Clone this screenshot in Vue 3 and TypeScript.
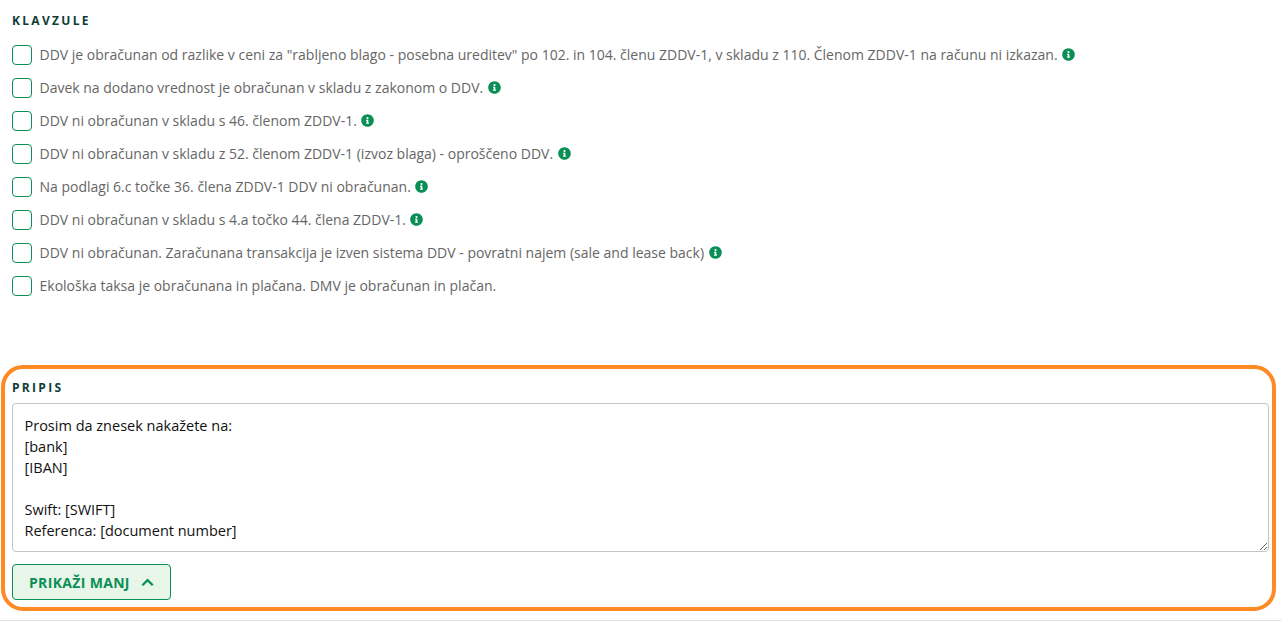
<template>
  <div class="page">
    <section class="clauses">
      <h3 class="label">KLAVZULE</h3>
      <ul class="clause-list">
        <li v-for="(clause, index) in clauses" :key="index" class="clause">
          <label class="clause-label">
            <input v-model="clause.checked" type="checkbox" class="check" />
            <span>{{ clause.text }}</span>
          </label>
          <svg v-if="clause.info" class="info" viewBox="0 0 512 512" aria-hidden="true">
            <path
              d="M256 8C119 8 8 119 8 256s111 248 248 248 248-111 248-248S393 8 256 8zm0 110c23.200 0 42 18.800 42 42s-18.800 42-42 42-42-18.800-42-42 18.800-42 42-42zm56 254c0 6.600-5.400 12-12 12h-88c-6.600 0-12-5.400-12-12v-24c0-6.600 5.400-12 12-12h12v-64h-12c-6.600 0-12-5.400-12-12v-24c0-6.600 5.400-12 12-12h64c6.600 0 12 5.400 12 12v100h12c6.600 0 12 5.400 12 12v24z"
            />
          </svg>
        </li>
      </ul>
    </section>

    <section class="note">
      <h3 class="label">PRIPIS</h3>
      <textarea v-model="note" class="note-input" spellcheck="false"></textarea>
      <button class="toggle" type="button">
        PRIKAŽI MANJ
        <svg class="chevron" viewBox="0 0 14 9" aria-hidden="true">
          <path d="M1.500 7.500 7 2l5.500 5.500" />
        </svg>
      </button>
    </section>
    <div class="divider"></div>
  </div>
</template>

<script setup lang="ts">
import { ref } from 'vue'

// Clause options
const clauses = ref([
  {
    text: 'DDV je obračunan od razlike v ceni za "rabljeno blago - posebna ureditev" po 102. in 104. členu ZDDV-1, v skladu z 110. Členom ZDDV-1 na računu ni izkazan.',
    info: true,
    checked: false
  },
  { text: 'Davek na dodano vrednost je obračunan v skladu z zakonom o DDV.', info: true, checked: false },
  { text: 'DDV ni obračunan v skladu s 46. členom ZDDV-1.', info: true, checked: false },
  { text: 'DDV ni obračunan v skladu z 52. členom ZDDV-1 (izvoz blaga) - oproščeno DDV.', info: true, checked: false },
  { text: 'Na podlagi 6.c točke 36. člena ZDDV-1 DDV ni obračunan.', info: true, checked: false },
  { text: 'DDV ni obračunan v skladu s 4.a točko 44. člena ZDDV-1.', info: true, checked: false },
  {
    text: 'DDV ni obračunan. Zaračunana transakcija je izven sistema DDV - povratni najem (sale and lease back)',
    info: true,
    checked: false
  },
  { text: 'Ekološka taksa je obračunana in plačana. DMV je obračunan in plačan.', info: false, checked: false }
])

// Note text
const note = ref(
  'Prosim da znesek nakažete na:\n[bank]\n[IBAN]\n\nSwift: [SWIFT]\nReferenca: [document number]'
)
</script>

<style scoped>
.page {
  width: 1281px;
  height: 621px;
  overflow: hidden;
  font-family: 'Open Sans', sans-serif;
  color: #666;
}

.clauses {
  height: 365px;
  padding: 14px 12px 0;
  box-sizing: border-box;
}

.label {
  margin: 0;
  font-size: 12px;
  line-height: 13px;
  font-weight: 700;
  letter-spacing: 2.300px;
  color: #0f3d36;
}

.clause-list {
  list-style: none;
  margin: 11px 0 0;
  padding: 0;
}

.clause {
  display: flex;
  align-items: center;
  height: 33px;
}

.clause-label {
  display: flex;
  align-items: center;
  gap: 7.500px;
  font-size: 14px;
}

.check {
  appearance: none;
  width: 20px;
  height: 20px;
  margin: 0;
  border: 1px solid #0a8f55;
  border-radius: 4px;
  background: #fff;
}

.info {
  width: 13px;
  height: 13px;
  margin-left: 4.500px;
  fill: #0a8f55;
}

.note {
  width: 1275px;
  height: 246px;
  margin-left: 1px;
  padding: 12px 7px 0 7px;
  box-sizing: border-box;
  border: 4px solid #ff8a24;
  border-radius: 22px;
}

.note-input {
  display: block;
  width: 1257px;
  height: 149px;
  margin-top: 9px;
  padding: 11px 11.500px 6px;
  box-sizing: border-box;
  border: 1px solid #c4c4c4;
  border-radius: 4px;
  font-family: inherit;
  font-size: 14.500px;
  font-weight: 500;
  line-height: 21px;
  color: #111;
  outline: none;
}

.toggle {
  display: flex;
  align-items: center;
  gap: 11px;
  width: 159px;
  height: 36px;
  margin-top: 12px;
  padding: 0 16px;
  border: 1px solid #0a8f55;
  border-radius: 4px;
  background: #e8f5e9;
  font-family: inherit;
  font-size: 14px;
  font-weight: 700;
  letter-spacing: 0.33px;
  color: #0a8f55;
  white-space: nowrap;
}

.chevron {
  width: 14px;
  height: 9px;
  fill: none;
  stroke: #0a8f55;
  stroke-width: 2.400;
}

.divider {
  height: 1px;
  margin-top: 9px;
  background: #ddd;
}
</style>
